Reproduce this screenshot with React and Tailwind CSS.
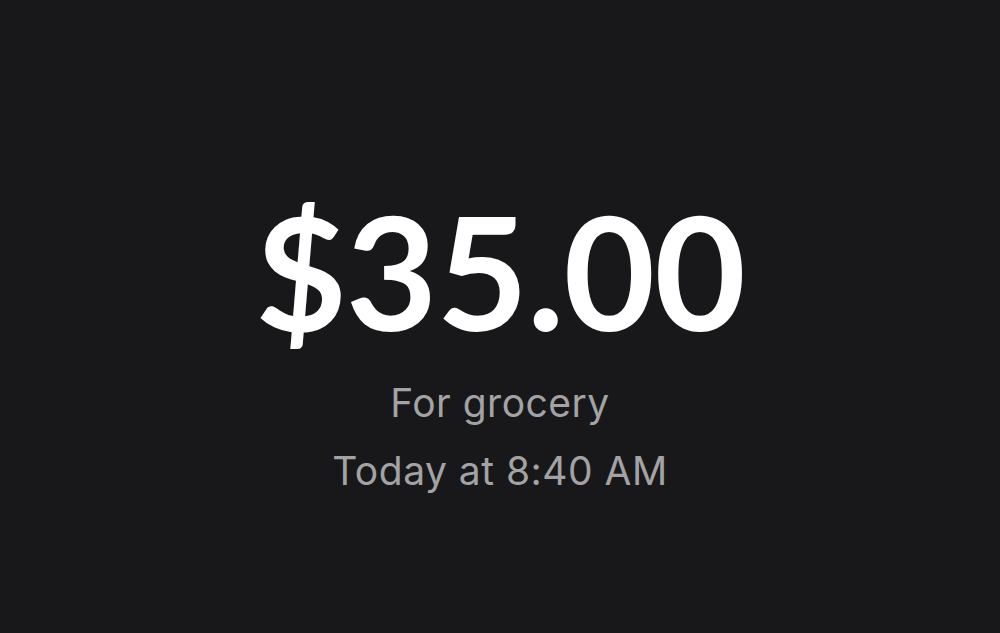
export default function App() {
  return (
    <div className="min-h-screen w-full bg-[#18181a] flex flex-col items-center">
      <div className="mt-[171px] font-['Lato',sans-serif] text-white font-bold text-[158px] leading-[198px] tracking-[-1px]">
        $35.00
      </div>
      <div className="flex flex-col items-center font-['Inter',sans-serif] text-[#a3a3a6] text-[39px] leading-[68px] tracking-[0.5px]">
        <div>For grocery</div>
        <div>Today at 8:40 AM</div>
      </div>
    </div>
  );
}
